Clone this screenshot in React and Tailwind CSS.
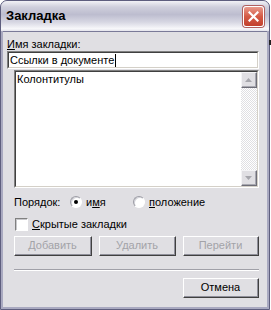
import React, { useState } from "react";

const sunken = "border-t border-l border-t-[#808080] border-l-[#808080] border-b border-r border-b-white border-r-white";
const sunkenInner = "border-t border-l border-t-[#404040] border-l-[#404040] border-b border-r border-b-[#d4d0c8] border-r-[#d4d0c8]";

const Btn = ({ children, disabled, className = "" }) => (
    <div className={`h-[20px] border-t border-l border-t-white border-l-white border-b border-r border-b-[#404040] border-r-[#404040] ${className}`}>
        <div className="h-full border-b border-r border-b-[#8f8f9a] border-r-[#8f8f9a] bg-[#e0dfe3] flex items-center justify-center">
            <span className={disabled ? "text-[#a3a3a8]" : "text-black"}>{children}</span>
        </div>
    </div>
);

const ScrollBtn = ({ up }) => (
    <div className="h-[16px] w-[16px] border-t border-l border-t-[#f4f4f6] border-l-[#f4f4f6] border-b border-r border-b-[#6e6e78] border-r-[#6e6e78]">
        <div className="h-full border-b border-r border-b-[#a8a8b0] border-r-[#a8a8b0] bg-[#e0dfe3] flex items-center justify-center">
            <svg width="7" height="4" viewBox="0 0 7 4">
                {up ? <polygon points="3.5,0 7,4 0,4" fill="#a6a6ac" /> : <polygon points="0,0 7,0 3.5,4" fill="#a6a6ac" />}
            </svg>
        </div>
    </div>
);

const Radio = ({ checked }) => (
    <div className="w-[12px] h-[12px] rounded-full border border-t-[#9c9ca4] border-l-[#9c9ca4] border-b-white border-r-white bg-white flex items-center justify-center shadow-[inset_1px_1px_0_#d4d4da]">
        {checked && <div className="w-[4px] h-[4px] rounded-full bg-black" />}
    </div>
);

const App = () => {
    const [order, setOrder] = useState("name");

    return (
        <div className="relative w-[271px] h-[310px] bg-white font-['Liberation_Sans',Arial,sans-serif] text-[11px] leading-[13px] text-black">
            <div className="absolute right-0 top-[40px] w-[2px] h-[5px] bg-[#222]" />
            <div className="w-[270px] h-[310px] flex flex-col rounded-t-[7px] overflow-hidden bg-[#a9a9c0] border border-[#5e5e7e]">
                {/* title bar */}
                <div className="h-[30px] shrink-0 flex items-center justify-between pl-[5px] pr-[5px] bg-[linear-gradient(#f2f2f6_0%,#cfcfdc_20%,#bdbdcf_45%,#d6d6e2_70%,#f7f7fa_92%,#e4e4ec_100%)]">
                    <span className="font-bold text-[13px] leading-[16px] text-black">Закладка</span>
                    <div className="w-[21px] h-[21px] rounded-[3px] border border-white bg-[linear-gradient(#e99a8c,#d45a45_50%,#c2412e)] flex items-center justify-center shadow-[0_0_0_1px_#b06060]">
                        <svg width="11" height="11" viewBox="0 0 11 11">
                            <path d="M1.5 1.5 L9.5 9.5 M9.5 1.5 L1.5 9.5" stroke="white" strokeWidth="2.2" strokeLinecap="square" />
                        </svg>
                    </div>
                </div>

                {/* client area */}
                <div className="flex-1 mx-[2px] mb-[2px] border-t border-[#7a7a98] bg-[#e0dfe3] flex flex-col">
                    <div className="pl-[4px] pt-[6px] h-[19px]">
                        <span className="underline">И</span>мя закладки:
                    </div>

                    <div className={`ml-[4px] w-[252px] h-[18px] ${sunken}`}>
                        <div className={`h-full bg-white flex items-center pl-[1px] ${sunkenInner}`}>
                            <span>Ссылки в документе</span>
                            <span className="w-[1px] h-[13px] bg-black ml-[1px]" />
                        </div>
                    </div>

                    <div className={`mt-[1px] ml-[11px] w-[245px] h-[118px] ${sunken}`}>
                        <div className={`h-full bg-white flex ${sunkenInner}`}>
                            <div className="flex-1 pl-[1px] pt-[1px]">Колонтитулы</div>
                            <div className="w-[16px] flex flex-col bg-[repeating-conic-gradient(#e0dfe3_0_25%,#ffffff_0_50%)] bg-[length:2px_2px]">
                                <ScrollBtn up />
                                <div className="flex-1" />
                                <ScrollBtn />
                            </div>
                        </div>
                    </div>

                    <div className="mt-[7px] h-[14px] pl-[11px] flex items-center">
                        <span className="w-[56px]">Порядок:</span>
                        <div className="flex items-center gap-[4px] w-[63px] cursor-pointer" onClick={() => setOrder("name")}>
                            <Radio checked={order === "name"} />
                            <span>и<span className="underline">м</span>я</span>
                        </div>
                        <div className="flex items-center gap-[4px] cursor-pointer" onClick={() => setOrder("pos")}>
                            <Radio checked={order === "pos"} />
                            <span><span className="underline">п</span>оложение</span>
                        </div>
                    </div>

                    <div className="mt-[9px] h-[13px] pl-[12px] flex items-center gap-[4px]">
                        <div className={`w-[13px] h-[13px] ${sunken} bg-white shadow-[inset_1px_1px_0_#c8c8cc]`} />
                        <span><span className="underline">С</span>крытые закладки</span>
                    </div>

                    <div className="mt-[5px] pl-[11px] flex gap-[7px]">
                        <Btn disabled className="w-[78px]">Добавить</Btn>
                        <Btn disabled className="w-[77px]">Удалить</Btn>
                        <Btn disabled className="w-[76px]">Перейти</Btn>
                    </div>

                    <div className="mt-[13px] ml-[11px] w-[245px] border-t border-t-[#a0a0a8] border-b border-b-white" />

                    <div className="mt-[7px] pl-[180px]">
                        <Btn className="w-[76px]">Отмена</Btn>
                    </div>
                </div>
            </div>
        </div>
    );
};

export default App;
